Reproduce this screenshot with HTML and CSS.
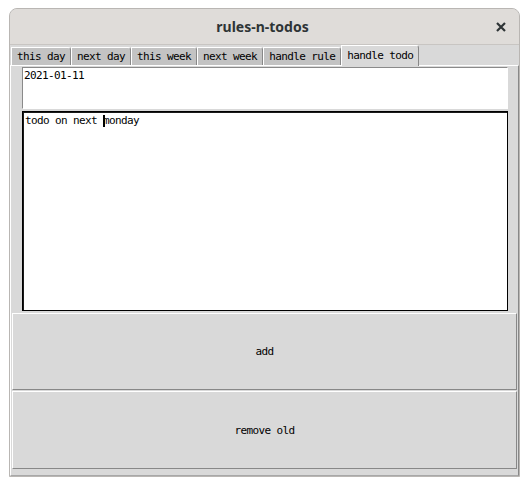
FILE: index.html
```html
<!DOCTYPE html>
<html>
<head>
<meta charset="utf-8">
<title>rules-n-todos</title>
<link rel="stylesheet" href="styles.css">
</head>
<body>
<div class="window">
  <div class="titlebar">
    <div class="title">rules-n-todos</div>
    <div class="close">
      <svg width="10" height="10" viewBox="0 0 10 10"><path d="M1 1 L9 9 M9 1 L1 9" stroke="#2e3436" stroke-width="2.2" stroke-linecap="butt"/></svg>
    </div>
  </div>
  <div class="content">
    <div class="tabs">
      <div class="tab">this day</div>
      <div class="tab">next day</div>
      <div class="tab">this week</div>
      <div class="tab">next week</div>
      <div class="tab">handle rule</div>
      <div class="tab active">handle todo</div>
    </div>
    <div class="pane">
      <div class="entry">2021-01-11</div>
      <div class="textbox">todo on next <span class="caret">m</span>onday</div>
      <div class="button add">add</div>
      <div class="button remove">remove old</div>
    </div>
  </div>
</div>
</body>
</html>
```

FILE: styles.css
```css
html, body {
  margin: 0;
  padding: 0;
  background: #ffffff;
}

.window {
  margin: 8px 0 0 9px;
  width: 511px;
  height: 469px;
  box-sizing: border-box;
  border: 1px solid #b9b6b3;
  border-radius: 8px 8px 0 0;
  overflow: hidden;
  display: flex;
  flex-direction: column;
  background: #d9d9d9;
}

.titlebar {
  height: 35px;
  flex: none;
  background: #dfdcd9;
  border-bottom: 1px solid #c8c5c2;
  display: grid;
  grid-template-columns: 1fr auto 1fr;
  align-items: center;
}

.title {
  grid-column: 2;
  font-family: "Noto Sans", sans-serif;
  font-weight: bold;
  font-size: 14px;
  color: #2e3436;
  padding-right: 4px;
}

.close {
  grid-column: 3;
  justify-self: end;
  margin-right: 13px;
  display: flex;
}

.content {
  flex: 1;
  display: flex;
  flex-direction: column;
  font-family: "DejaVu Sans Mono", monospace;
  font-size: 11px;
  letter-spacing: -0.62px;
  color: #000;
}

.tabs {
  display: flex;
  align-items: flex-end;
  height: 20px;
  padding-left: 1px;
  flex: none;
}

.tab {
  height: 18px;
  box-sizing: border-box;
  padding: 0 5px 0 5px;
  line-height: 17px;
  background: #c3c3c3;
  border-left: 1px solid #ffffff;
  border-top: 1px solid #ffffff;
  border-right: 1px solid #888888;
  border-top-right-radius: 3px;
  white-space: nowrap;
}

.tab.active {
  background: #d9d9d9;
  height: 21px;
  line-height: 19px;
  margin-bottom: -1px;
  position: relative;
}

.pane {
  flex: 1;
  border-top: 1px solid #ffffff;
  border-left: 1px solid #ffffff;
  border-right: 1px solid #888888;
  border-bottom: 1px solid #a8a8a8;
  display: flex;
  flex-direction: column;
  padding-top: 1px;
}

.entry {
  margin: 0 10px 0 11px;
  height: 42px;
  box-sizing: border-box;
  background: #ffffff;
  border-top: 1px solid #8a8a8a;
  border-left: 1px solid #8a8a8a;
  border-right: 1px solid #ffffff;
  border-bottom: 1px solid #ffffff;
  padding: 1px 1px;
  line-height: 13px;
}

.textbox {
  margin: 2px 10px 0 11px;
  height: 200px;
  box-sizing: border-box;
  background: #ffffff;
  border: 1px solid #000000;
  box-shadow: inset 1px 1px 0 #1a1a1a;
  padding: 2px 2px;
  line-height: 13px;
}

.caret {
  position: relative;
}

.caret::before {
  content: "";
  position: absolute;
  left: 0;
  top: 1px;
  width: 2px;
  height: 12px;
  background: #000;
}

.button {
  margin: 0 1px;
  box-sizing: border-box;
  border-top: 1px solid #ffffff;
  border-left: 1px solid #ffffff;
  border-right: 1px solid #888888;
  border-bottom: 1px solid #888888;
  display: flex;
  align-items: center;
  justify-content: center;
  background: #d9d9d9;
}

.button.add {
  margin-top: 2px;
  height: 77px;
}

.button.remove {
  margin-top: 1px;
  height: 78px;
}
```
